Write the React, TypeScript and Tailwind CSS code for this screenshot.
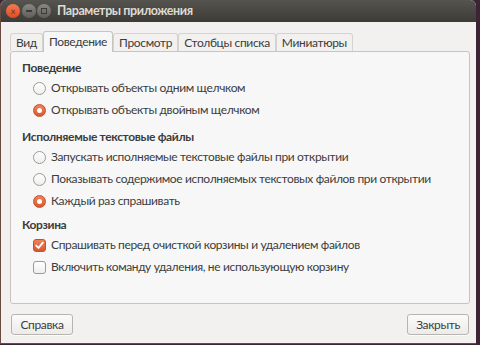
import React from "react";

const font = { fontFamily: 'Lato, "Noto Sans", sans-serif' };

function Radio({ checked }: { checked?: boolean }) {
  if (checked) {
    return (
      <span className="flex h-[13px] w-[13px] shrink-0 items-center justify-center rounded-full border border-[#c2512a] bg-gradient-to-b from-[#f0825a] to-[#d9582e]">
        <span className="h-[5px] w-[5px] rounded-full bg-white" />
      </span>
    );
  }
  return <span className="h-[13px] w-[13px] shrink-0 rounded-full border border-[#9d9a95] bg-gradient-to-b from-white to-[#f0efee]" />;
}

function Check({ checked }: { checked?: boolean }) {
  if (checked) {
    return (
      <span className="flex h-[13px] w-[13px] shrink-0 items-center justify-center rounded-[3px] border border-[#c2512a] bg-gradient-to-b from-[#f0825a] to-[#d9582e]">
        <svg width="9" height="9" viewBox="0 0 9 9">
          <path d="M1.2 4.6 L3.5 7 L7.8 1.6" fill="none" stroke="white" strokeWidth="1.8" strokeLinecap="round" strokeLinejoin="round" />
        </svg>
      </span>
    );
  }
  return <span className="h-[13px] w-[13px] shrink-0 rounded-[3px] border border-[#9d9a95] bg-gradient-to-b from-white to-[#f0efee]" />;
}

function Row({ children, label }: { children: React.ReactNode; label: string }) {
  return (
    <div className="flex h-[22px] items-center gap-[5px] whitespace-nowrap pl-[11px]">
      {children}
      <span>{label}</span>
    </div>
  );
}

function Heading({ text }: { text: string }) {
  return <div className="flex h-[18px] items-center whitespace-nowrap font-bold">{text}</div>;
}

const tabs = ["Вид", "Поведение", "Просмотр", "Столбцы списка", "Миниатюры"];

export default function App() {
  return (
    <div className="h-[345px] w-[480px] bg-[#3d2333]" style={font}>
      <div className="flex h-[344px] w-[476px] flex-col overflow-hidden rounded-t-[6px] border-b border-l border-[#6b4943] bg-[#f2f1f0] text-[12px] tracking-[-0.35px] text-[#3c3c3c]">
        <div className="flex h-[22px] shrink-0 items-center bg-gradient-to-b from-[#55544f] to-[#3c3b37] pl-[5px]">
          <span className="flex h-[14px] w-[14px] items-center justify-center rounded-full bg-gradient-to-b from-[#f47a52] to-[#df4b1c] text-[9px] leading-none text-[#7a2a10]">×</span>
          <span className="ml-[2px] flex h-[14px] w-[14px] items-center justify-center rounded-full bg-gradient-to-b from-[#8a8883] to-[#5f5e5a]">
            <span className="h-[2px] w-[6px] bg-[#3c3b37]" />
          </span>
          <span className="ml-[1px] flex h-[14px] w-[14px] items-center justify-center rounded-full bg-gradient-to-b from-[#8a8883] to-[#5f5e5a]">
            <span className="h-[6px] w-[6px] border border-[#3c3b37]" />
          </span>
          <span className="ml-[6px] text-[12.5px] font-bold tracking-[-0.4px] text-[#dfdbd2]">Параметры приложения</span>
        </div>

        <div className="flex h-[29px] shrink-0 items-end pl-[9px]">
          {tabs.map((t, i) =>
            i === 1 ? (
              <div key={t} className="relative z-10 -mb-px flex h-[21px] items-center rounded-t-[3px] border border-b-0 border-[#c8c5c1] bg-[#f7f7f7] px-[5px]">
                {t}
              </div>
            ) : (
              <div key={t} className="flex h-[18px] items-center rounded-t-[3px] border border-b-0 border-[#d6d3cf] px-[5px]">
                {t}
              </div>
            )
          )}
        </div>

        <div className="ml-[9px] h-[253px] w-[460px] shrink-0 rounded-[3px] border border-[#c8c5c1] bg-[#f7f7f7] px-[11px] pt-[7px]">
          <Heading text="Поведение" />
          <Row label="Открывать объекты одним щелчком">
            <Radio />
          </Row>
          <Row label="Открывать объекты двойным щелчком">
            <Radio checked />
          </Row>
          <div className="h-[7px]" />
          <Heading text="Исполняемые текстовые файлы" />
          <Row label="Запускать исполняемые текстовые файлы при открытии">
            <Radio />
          </Row>
          <Row label="Показывать содержимое исполняемых текстовых файлов при открытии">
            <Radio />
          </Row>
          <Row label="Каждый раз спрашивать">
            <Radio checked />
          </Row>
          <div className="h-[4px]" />
          <Heading text="Корзина" />
          <Row label="Спрашивать перед очисткой корзины и удалением файлов">
            <Check checked />
          </Row>
          <Row label="Включить команду удаления, не использующую корзину">
            <Check />
          </Row>
        </div>

        <div className="flex flex-1 items-start justify-between pl-[10px] pr-[7px] pt-[10px]">
          <button className="h-[21px] w-[62px] rounded-[3px] border border-[#b8b5b0] bg-gradient-to-b from-[#fbfbfa] to-[#ecebe9] text-[12px] text-[#3c3c3c] shadow-[0_1px_0_rgba(255,255,255,0.8)]">
            Справка
          </button>
          <button className="h-[21px] w-[62px] rounded-[3px] border border-[#b8b5b0] bg-gradient-to-b from-[#fbfbfa] to-[#ecebe9] text-[12px] text-[#3c3c3c] shadow-[0_1px_0_rgba(255,255,255,0.8)]">
            Закрыть
          </button>
        </div>
      </div>
    </div>
  );
}
